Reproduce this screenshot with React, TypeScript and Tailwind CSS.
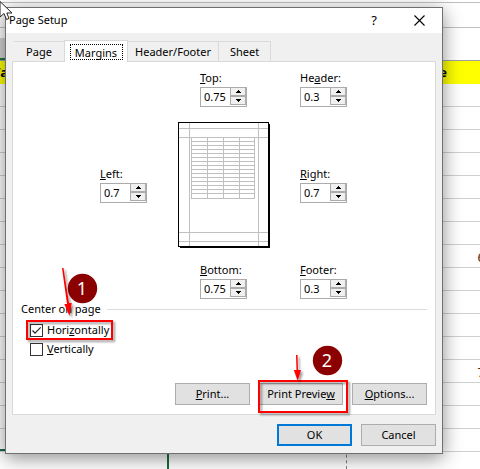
import type { ReactNode } from "react";

const rows = ["", "", "", "", "", "", "", "6", "", "", "", "", "7", "", "", ""];

function SheetBackground() {
  return (
    <div className="absolute inset-0 overflow-hidden bg-white font-['Noto_Sans',sans-serif] text-[13px]" aria-hidden="true">
      <div className="h-[3px] border-b border-[#c0c0c0]" />
      <div className="h-[25px] border-b border-[#c0c0c0]" />
      <div className="flex h-[33px] items-end border-b border-[#a0a0a0]">
        <div className="h-[22px] w-2 border-b-2 border-[#217346] bg-[#d2d2d2]" />
      </div>
      <div className="-ml-2 flex h-[23px] items-center justify-between bg-[#ffff00] pr-[33px] font-bold text-black">
        <span>Va</span>
        <span>e</span>
      </div>
      {rows.map((value, i) => (
        <div key={i} className="-mr-[5px] flex h-[23px] items-center justify-end border-b border-[#d0d0d0] pt-[3px] text-[#5a2000]">
          {value}
        </div>
      ))}
      <div className="absolute left-0 top-[449px] h-5 w-[169px] border-r-2 border-t-2 border-[#1a6b45]" />
      <div className="absolute bottom-0 left-[346px] h-5 border-l border-dashed border-[#808080]" />
    </div>
  );
}

function Arrow({ down = false }: { down?: boolean }) {
  return (
    <svg viewBox="0 0 5 3" className="h-[3px] w-[5px]" shapeRendering="crispEdges">
      <path d={down ? "M0 0H5V1H4V2H3V3H2V2H1V1H0Z" : "M2 0H3V1H4V2H5V3H0V2H1V1H2Z"} />
    </svg>
  );
}

type SpinFieldProps = { id: string; label: ReactNode; value: string; className?: string };

function SpinField({ id, label, value, className = "" }: SpinFieldProps) {
  return (
    <div className={className}>
      <label htmlFor={id} className="block h-[17px] leading-4">
        {label}
      </label>
      <div className="flex h-5 w-[47px] border border-[#ababab] bg-white">
        <input id={id} defaultValue={value} className="w-[29px] min-w-0 pl-[3px] outline-none" />
        <div className="flex w-4 flex-col pb-px">
          <button
            type="button"
            aria-label="Increase"
            className="flex flex-1 items-center justify-center border-x border-b border-[#ababab] bg-[#f0f0f0]"
          >
            <Arrow />
          </button>
          <button
            type="button"
            aria-label="Decrease"
            className="flex flex-1 items-center justify-center border border-[#ababab] bg-[#f0f0f0]"
          >
            <Arrow down />
          </button>
        </div>
      </div>
    </div>
  );
}

function PagePreview() {
  const lines = Array.from({ length: 14 }, (_, i) => 19 + i * 4);
  return (
    <svg viewBox="0 0 92 126" className="h-[126px] w-[92px]" shapeRendering="crispEdges">
      <rect x="2" y="2" width="90" height="124" fill="#000" />
      <rect width="91" height="125" fill="#000" />
      <rect x="1" y="1" width="89" height="123" fill="#fff" />
      <g fill="#c0c0c0">
        {[6, 15, 110, 119].map((y) => (
          <rect key={y} x="1" y={y} width="89" height="1" />
        ))}
        {[11, 80].map((x) => (
          <rect key={x} x={x} y="1" width="1" height="123" />
        ))}
        {[13, 29, 45, 61, 76].map((x) => (
          <rect key={x} x={x} y="15" width="1" height="62" />
        ))}
        {[...lines, 76].map((y) => (
          <rect key={y} x="13" y={y} width="64" height="1" />
        ))}
      </g>
    </svg>
  );
}

function CheckField({ label, checked = false }: { label: ReactNode; checked?: boolean }) {
  return (
    <label className="flex h-[19px] items-center gap-1">
      <span className="relative h-[13px] w-[13px]">
        <input
          type="checkbox"
          defaultChecked={checked}
          className="peer block h-[13px] w-[13px] appearance-none border border-[#333] bg-white"
        />
        <svg
          viewBox="0 0 13 13"
          className="pointer-events-none absolute inset-0 hidden h-[13px] w-[13px] peer-checked:block"
        >
          <path d="M2.5 6.5L5 9.2L10.7 3.3" fill="none" stroke="#222" strokeWidth="1.2" />
        </svg>
      </span>
      <span>{label}</span>
    </label>
  );
}

function DialogButton({ children, className }: { children: ReactNode; className: string }) {
  return (
    <button type="button" className={`flex h-[22px] items-center justify-center bg-[#e1e1e1] ${className}`}>
      {children}
    </button>
  );
}

function Annotations() {
  return (
    <svg
      viewBox="0 0 480 469"
      className="pointer-events-none absolute left-0 top-0 h-[469px] w-[480px]"
      fontFamily="'Noto Sans', sans-serif"
      fontSize="18"
      textAnchor="middle"
    >
      <defs>
        <filter id="drop" x="-50%" y="-20%" width="220%" height="150%">
          <feDropShadow dx="2" dy="2" stdDeviation="1.2" floodColor="#000" floodOpacity="0.4" />
        </filter>
      </defs>
      <circle cx="82.5" cy="288.5" r="14.7" fill="#8b0000" />
      <text x="82" y="295" fill="#fff">1</text>
      <circle cx="327.5" cy="360.5" r="14.7" fill="#8b0000" />
      <text x="327" y="367" fill="#fff">2</text>
      <g fill="none" stroke="#f00" strokeWidth="2" filter="url(#drop)">
        <rect x="27" y="321" width="85" height="18" />
        <rect x="259" y="381" width="88" height="31" />
      </g>
      <g filter="url(#drop)" fill="#f00">
        <path d="M62 268H63.5L69 303H71.7L69.5 316L64.3 304H67Z" />
        <path d="M296 355H297.5L298 370H301L297.7 381L293.8 370H296.5Z" />
      </g>
      {/* mouse pointer */}
      <path d="M0 1.5V17L4 13.5L6.5 19.5L9 18.5L6.8 13H12Z" fill="#fff" stroke="#222" strokeWidth="1" />
    </svg>
  );
}

export default function App() {
  return (
    <main className="relative min-h-screen overflow-hidden pb-[14px] pl-[5px] pr-[37px] pt-[7px] font-['Noto_Sans',sans-serif] text-[11px] text-black">
      <SheetBackground />
      <section
        role="dialog"
        aria-label="Page Setup"
        className="relative border border-[#707070] bg-[#f0f0f0] pb-[7px] shadow-[0_4px_18px_rgba(0,0,0,0.45)]"
      >
        <header className="flex h-[25px] items-center bg-white pl-[3px] pr-[17px]">
          <h1 className="flex-1">Page Setup</h1>
          <button type="button" aria-label="Help" className="w-5 text-[13px]">
            ?
          </button>
          <button type="button" aria-label="Close" className="ml-[30px]">
            <svg viewBox="0 0 11 11" className="h-[11px] w-[11px]">
              <path d="M.5 .5L10.5 10.5M10.5 .5L.5 10.5" stroke="#000" strokeWidth="1.1" />
            </svg>
          </button>
        </header>

        <div className="px-[6px] pt-[7px]">
          <div role="tablist" className="flex items-end pl-[2px]">
            <button type="button" role="tab" className="h-5 w-[50px] border-t border-[#d9d9d9] pt-[2px]">
              Page
            </button>
            <button
              type="button"
              role="tab"
              aria-selected="true"
              className="relative z-10 -mb-px flex h-[22px] w-16 items-start justify-center border border-b-0 border-[#d9d9d9] bg-white px-1 pt-[3px]"
            >
              <span className="block h-4 w-[53px] border border-dotted border-black leading-4">Margins</span>
            </button>
            <button type="button" role="tab" className="h-5 w-[91px] border-r border-t border-[#d9d9d9] pt-[2px]">
              Header/Footer
            </button>
            <button type="button" role="tab" className="h-5 w-[52px] border-r border-t border-[#d9d9d9] pt-[2px]">
              Sheet
            </button>
          </div>

          <div className="border border-[#d9d9d9] bg-white pb-[9px] pt-2">
            <div className="grid grid-cols-[78px_22px_70px_30px_1fr] pl-[87px]">
              <SpinField id="top" label={<><u>T</u>op:</>} value="0.75" className="col-start-3" />
              <SpinField id="header" label={<>He<u>a</u>der:</>} value="0.3" className="col-start-5" />

              <SpinField id="left" label={<><u>L</u>eft:</>} value="0.7" className="col-start-1 row-start-2 pt-[59px]" />
              <div className="col-span-2 col-start-2 row-start-2 pb-[14px] pt-[15px]">
                <PagePreview />
              </div>
              <SpinField id="right" label={<><u>R</u>ight:</>} value="0.7" className="col-start-5 row-start-2 pt-[59px]" />

              <SpinField id="bottom" label={<><u>B</u>ottom:</>} value="0.75" className="col-start-3 row-start-3" />
              <SpinField id="footer" label={<><u>F</u>ooter:</>} value="0.3" className="col-start-5 row-start-3" />
            </div>

            <fieldset className="pl-[17px] pr-2">
              <div className="-ml-[9px] mb-[2px] flex h-5 items-center gap-[6px]">
                <span>Center on page</span>
                <span className="h-px flex-1 bg-[#dcdcdc]" />
              </div>
              <CheckField label={<>Hori<u>z</u>ontally</>} checked />
              <CheckField label={<><u>V</u>ertically</>} />
            </fieldset>

            <div className="mt-6 flex justify-end gap-[9px] pr-2">
              <DialogButton className="w-[75px] border border-[#adadad]">
                <span><u>P</u>rint...</span>
              </DialogButton>
              <DialogButton className="w-[84px] border border-[#adadad]">
                <span>Print Previe<u>w</u></span>
              </DialogButton>
              <DialogButton className="w-[75px] border border-[#adadad]">
                <span><u>O</u>ptions...</span>
              </DialogButton>
            </div>
          </div>

          <footer className="flex justify-end gap-[9px] pt-[9px]">
            <DialogButton className="w-[75px] border-2 border-[#0078d7]">OK</DialogButton>
            <DialogButton className="w-[75px] border border-[#adadad]">Cancel</DialogButton>
          </footer>
        </div>
      </section>
      <Annotations />
    </main>
  );
}
